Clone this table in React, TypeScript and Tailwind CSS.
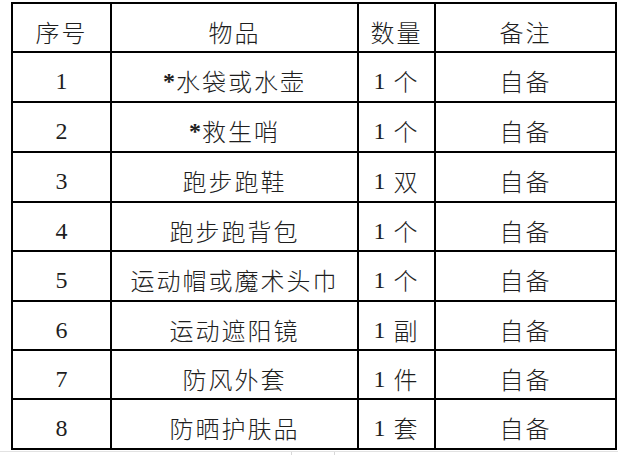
import React from "react";

const rows = [
  { no: "1", item: "*水袋或水壶", qty: "个" },
  { no: "2", item: "*救生哨", qty: "个" },
  { no: "3", item: "跑步跑鞋", qty: "双" },
  { no: "4", item: "跑步跑背包", qty: "个" },
  { no: "5", item: "运动帽或魔术头巾", qty: "个" },
  { no: "6", item: "运动遮阳镜", qty: "副" },
  { no: "7", item: "防风外套", qty: "件" },
  { no: "8", item: "防晒护肤品", qty: "套" },
];

const heights = ["h-[50px]", "h-[50px]", "h-[50px]", "h-[49px]", "h-[50px]", "h-[49px]", "h-[49px]", "h-[50px]"];

const cjk = "[font-family:'Noto_Sans_CJK_SC','Noto_Sans_CJK_JP',sans-serif] font-light tracking-[2px]";
const num = "[font-family:'Liberation_Serif',serif]";
const cell = "flex items-center justify-center border-r-2 border-b-2 border-black pt-2 text-[24px] text-[#1e1e1e]";

function Star() {
  return <span className={`${num} mr-[1px] text-[24px] font-bold`}>*</span>;
}

function ItemText({ text }: { text: string }) {
  if (text.startsWith("*")) {
    return (
      <span className="flex items-center">
        <Star />
        <span className={cjk}>{text.slice(1)}</span>
      </span>
    );
  }
  return <span className={cjk}>{text}</span>;
}

export default function App() {
  return (
    <div className="relative h-[455px] w-[618px] overflow-hidden bg-white">
      <div className="ml-[11px] mt-[2px] w-[606px] border-l-2 border-t-2 border-black">
        <div className="flex h-[49px]">
          <div className={`${cell} w-[99px]`}>
            <span className={cjk}>序号</span>
          </div>
          <div className={`${cell} w-[247px]`}>
            <span className={cjk}>物品</span>
          </div>
          <div className={`${cell} w-[77px]`}>
            <span className={cjk}>数量</span>
          </div>
          <div className={`${cell} w-[181px]`}>
            <span className={cjk}>备注</span>
          </div>
        </div>
        {rows.map((r, i) => (
          <div key={r.no} className={`flex ${heights[i]}`}>
            <div className={`${cell} w-[99px]`}>
              <span className={num}>{r.no}</span>
            </div>
            <div className={`${cell} w-[247px]`}>
              <ItemText text={r.item} />
            </div>
            <div className={`${cell} w-[77px]`}>
              <span className={`${num} mr-[8px]`}>1</span>
              <span className={cjk}>{r.qty}</span>
            </div>
            <div className={`${cell} w-[181px]`}>
              <span className={cjk}>自备</span>
            </div>
          </div>
        ))}
      </div>
      <div className="mt-[1px] flex h-[4px] border-t border-[#e2e2e2]">
        <div className="ml-[291px] w-[44px] border-x border-[#d8d8d8]" />
      </div>
    </div>
  );
}
